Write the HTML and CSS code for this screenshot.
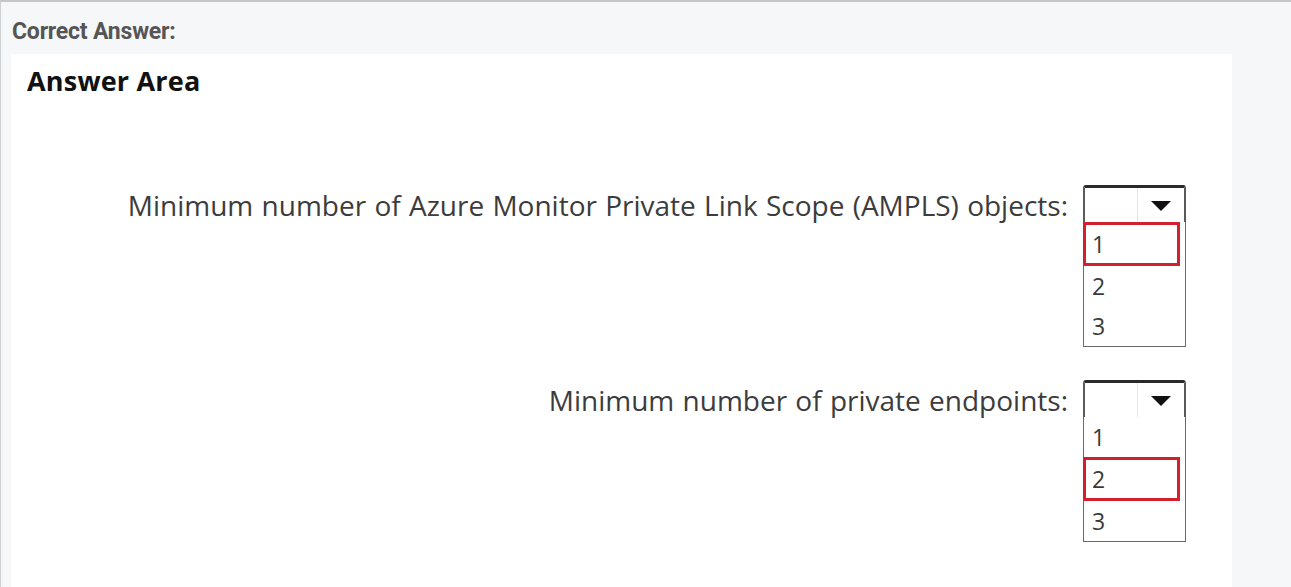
FILE: index.html
```html
<!DOCTYPE html>
<html>
<head>
<meta charset="utf-8">
<link rel="stylesheet" href="styles.css">
</head>
<body>
<div class="heading">Correct Answer:</div>
<div class="panel">
  <div class="title">Answer Area</div>
  <div class="rows">
    <div class="row">
      <div class="label">Minimum number of Azure Monitor Private Link Scope (AMPLS) objects:</div>
      <div class="dd">
        <div class="dd-head">
          <div class="dd-field"></div>
          <div class="dd-btn"><span class="arrow"></span></div>
        </div>
        <div class="dd-list">
          <div class="dd-item sel">1</div>
          <div class="dd-item">2</div>
          <div class="dd-item">3</div>
        </div>
      </div>
    </div>
    <div class="row">
      <div class="label">Minimum number of private endpoints:</div>
      <div class="dd">
        <div class="dd-head">
          <div class="dd-field"></div>
          <div class="dd-btn"><span class="arrow"></span></div>
        </div>
        <div class="dd-list">
          <div class="dd-item">1</div>
          <div class="dd-item sel">2</div>
          <div class="dd-item">3</div>
        </div>
      </div>
    </div>
  </div>
</div>
</body>
</html>
```

FILE: styles.css
```css
html, body {
  margin: 0;
  padding: 0;
}
body {
  width: 1291px;
  height: 587px;
  box-sizing: border-box;
  overflow: hidden;
  background: #f6f7f9;
  border-top: 2px solid #c4c6c9;
  border-left: 1px solid #cdd0d3;
}
.heading {
  font-family: "Roboto", "Liberation Sans", sans-serif;
  font-weight: 700;
  font-size: 23px;
  line-height: 26px;
  color: #555555;
  padding: 17px 0 0 11px;
  height: 35px;
  letter-spacing: -0.2px;
}
.panel {
  margin-left: 10px;
  width: 1221px;
  height: 533px;
  box-sizing: border-box;
  background: #ffffff;
  padding: 12px 46px 0 16px;
}
.title {
  font-family: "Open Sans", "Noto Sans", sans-serif;
  font-weight: 700;
  font-size: 27px;
  line-height: 30px;
  letter-spacing: 0.2px;
  color: #111111;
}
.rows {
  margin-top: 89px;
  display: flex;
  flex-direction: column;
  align-items: flex-end;
  gap: 33px;
}
.row {
  display: flex;
  align-items: flex-start;
  gap: 15px;
}
.label {
  font-family: "Open Sans", "Noto Sans", sans-serif;
  font-size: 28px;
  line-height: 34px;
  word-spacing: 1px;
  margin-top: 3px;
  color: #3c3c3c;
}
.dd {
  width: 103px;
}
.dd-head {
  height: 37px;
  box-sizing: border-box;
  display: flex;
  border: 2px solid #5a5a5a;
  border-top: 3px solid #2a2a2a;
  border-bottom: none;
  border-radius: 3px 3px 0 0;
}
.dd-field {
  flex: 1;
  border-right: 1px solid #e4e4e4;
}
.dd-btn {
  width: 46px;
  display: flex;
  align-items: center;
  justify-content: center;
}
.arrow {
  width: 0;
  height: 0;
  border-left: 10px solid transparent;
  border-right: 10px solid transparent;
  border-top: 10px solid #111111;
  margin-top: 1px;
}
.dd-list {
  border: 1px solid #6a6a6a;
  border-top: none;
}
.dd-item {
  height: 40px;
  box-sizing: border-box;
  padding-left: 8px;
  font-family: "Open Sans", "Noto Sans", sans-serif;
  font-size: 23px;
  line-height: 40px;
  color: #3a3a3a;
}
.dd-item.sel {
  height: 44px;
  line-height: 38px;
  margin-left: -1px;
  margin-right: 5px;
  padding-left: 6px;
  border: 3px solid #d3202e;
}
```
